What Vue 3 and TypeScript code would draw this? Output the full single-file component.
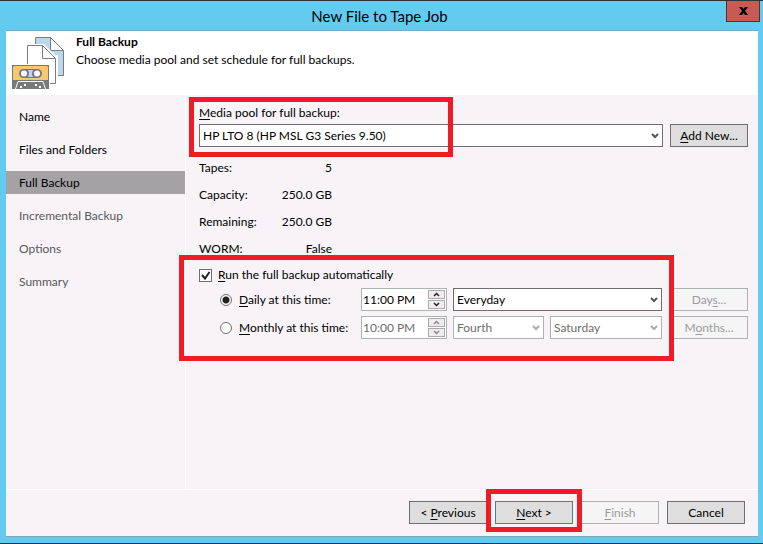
<script setup lang="ts">
import { ref } from 'vue'

interface Step {
  label: string
  state: 'done' | 'current' | 'pending'
}

const steps: Step[] = [
  { label: 'Name', state: 'done' },
  { label: 'Files and Folders', state: 'done' },
  { label: 'Full Backup', state: 'current' },
  { label: 'Incremental Backup', state: 'pending' },
  { label: 'Options', state: 'pending' },
  { label: 'Summary', state: 'pending' },
]

const poolInfo = [
  { name: 'Tapes:', value: '5' },
  { name: 'Capacity:', value: '250.0 GB' },
  { name: 'Remaining:', value: '250.0 GB' },
  { name: 'WORM:', value: 'False' },
]

const runAutomatically = ref(true)
const mode = ref<'daily' | 'monthly'>('daily')
const dailyTime = ref('11:00 PM')
const monthlyTime = ref('10:00 PM')
</script>

<template>
  <div class="window">
    <header class="titlebar">
      <h1 class="title">New File to Tape Job</h1>
      <button class="close" type="button" aria-label="Close">
        <svg width="9" height="8" viewBox="0 0 9 8">
          <path d="M0 0h3l1.500 2L6 0h3L6 4l3 4H6L4.500 6 3 8H0l3-4z" fill="#000" />
        </svg>
      </button>
    </header>

    <div class="client">
      <section class="banner">
        <svg class="banner-icon" width="52" height="53" viewBox="0 0 52 53">
          <path d="M23.500 .5h15l13 13v25h-28z" fill="#bcd6ee" stroke="#7b7d7c" />
          <path d="M38.500 .5v13h13z" fill="#fff" stroke="#7b7d7c" />
          <path d="M14 7h18l13 13v27.500H14z" fill="#fff" />
          <path d="M45 18v23" stroke="#fff" stroke-width="2" />
          <path d="M15.500 8.500h15l13 13v25h-28z" fill="#fff" stroke="#7b7d7c" />
          <path d="M30.500 8.500v13h13" fill="none" stroke="#7b7d7c" />
          <path d="M0 27h38v26H0z" fill="#fff" />
          <path d="M0 28h37v24H0z" fill="#787a79" />
          <path d="M1 30l1-1h33l1 1v13H1z" fill="#f5c872" />
          <rect x="7" y="32" width="23" height="9" rx="4.500" fill="#787a79" />
          <path d="M16 33h5q-2 3.500 0 7h-5q2-3.500 0-7z" fill="#bcd6ee" />
          <circle cx="12" cy="36.500" r="3" fill="#fff" />
          <circle cx="25" cy="36.500" r="3" fill="#fff" />
          <path d="M3.500 52l2.500-7.500h25l2.500 7.500" fill="none" stroke="#fff" />
          <path d="M8 49h2v2H8zM12 47h2v2h-2zM23 47h2v2h-2zM27 49h2v2h-2z" fill="#fff" />
        </svg>
        <div>
          <h2 class="banner-title">Full Backup</h2>
          <p class="banner-text">Choose media pool and set schedule for full backups.</p>
        </div>
      </section>

      <div class="body">
        <nav class="steps">
          <a v-for="step in steps" :key="step.label" href="#" class="step" :class="step.state">{{ step.label }}</a>
        </nav>

        <main class="panel">
          <div class="pool">
            <label for="pool"><u>M</u>edia pool for full backup:</label>
            <div class="row">
              <div class="select grow">
                <select id="pool">
                  <option>HP LTO 8 (HP MSL G3 Series 9.50)</option>
                </select>
                <svg width="8" height="6" viewBox="0 0 8 6"><path d="M1 1l3 3 3-3" /></svg>
              </div>
              <button class="button" type="button"><span><u>A</u>dd New...</span></button>
            </div>
            <div class="mark mark-pool"></div>
          </div>

          <dl class="info">
            <div v-for="item in poolInfo" :key="item.name" class="info-row">
              <dt>{{ item.name }}</dt>
              <dd>{{ item.value }}</dd>
            </div>
          </dl>

          <div class="schedule">
            <div class="check-row">
              <span class="check">
                <input id="auto" v-model="runAutomatically" type="checkbox" />
                <svg v-if="runAutomatically" width="13" height="13" viewBox="0 0 13 13">
                  <path d="M3 6l3 3.500L10.500 3" />
                </svg>
              </span>
              <label for="auto"><u>R</u>un the full backup automatically</label>
            </div>

            <div class="row">
              <div class="mode">
                <input id="daily" v-model="mode" type="radio" value="daily" />
                <label for="daily"><u>D</u>aily at this time:</label>
              </div>
              <div class="time">
                <input v-model="dailyTime" type="text" aria-label="Daily time" />
                <div class="spin">
                  <button type="button" aria-label="Later"><svg width="7" height="5" viewBox="0 0 7 5"><path d="M1 4l2.500-2.500L6 4" /></svg></button>
                  <button type="button" aria-label="Earlier"><svg width="7" height="5" viewBox="0 0 7 5"><path d="M1 1l2.500 2.500L6 1" /></svg></button>
                </div>
              </div>
              <div class="select grow">
                <select aria-label="Days of the week">
                  <option>Everyday</option>
                </select>
                <svg width="8" height="6" viewBox="0 0 8 6"><path d="M1 1l3 3 3-3" /></svg>
              </div>
              <button class="button last" type="button" disabled><span>Day<u>s</u>...</span></button>
            </div>

            <div class="row">
              <div class="mode">
                <input id="monthly" v-model="mode" type="radio" value="monthly" />
                <label for="monthly"><u>M</u>onthly at this time:</label>
              </div>
              <div class="time off">
                <input v-model="monthlyTime" type="text" aria-label="Monthly time" disabled />
                <div class="spin">
                  <button type="button" aria-label="Later" disabled><svg width="7" height="5" viewBox="0 0 7 5"><path d="M1 4l2.500-2.500L6 4" /></svg></button>
                  <button type="button" aria-label="Earlier" disabled><svg width="7" height="5" viewBox="0 0 7 5"><path d="M1 1l2.500 2.500L6 1" /></svg></button>
                </div>
              </div>
              <div class="select week off">
                <select aria-label="Week of the month" disabled>
                  <option>Fourth</option>
                </select>
                <svg width="8" height="6" viewBox="0 0 8 6"><path d="M1 1l3 3 3-3" /></svg>
              </div>
              <div class="select grow off">
                <select aria-label="Day of the week" disabled>
                  <option>Saturday</option>
                </select>
                <svg width="8" height="6" viewBox="0 0 8 6"><path d="M1 1l3 3 3-3" /></svg>
              </div>
              <button class="button last" type="button" disabled><span>M<u>o</u>nths...</span></button>
            </div>
            <div class="mark mark-schedule"></div>
          </div>
        </main>
      </div>

      <footer class="actions">
        <button class="button" type="button"><span>&lt; <u>P</u>revious</span></button>
        <div class="next">
          <button class="button primary" type="button"><span><u>N</u>ext &gt;</span></button>
          <div class="mark mark-next"></div>
        </div>
        <button class="button" type="button" disabled><span><u>F</u>inish</span></button>
        <button class="button" type="button"><span>Cancel</span></button>
      </footer>
    </div>
  </div>
</template>

<style>
body {
  margin: 0;
}
</style>

<style scoped>
.window,
.window * {
  box-sizing: border-box;
}

.window {
  display: flex;
  flex-direction: column;
  min-height: 100vh;
  padding: 0 5px 6px 6px;
  border-top: 1px solid #2b3336;
  border-bottom: 1px solid #12303f;
  background: #63caf0;
  color: #000;
  font: 12px/16px Lato, "Open Sans", sans-serif;
}

button,
input,
select {
  font: inherit;
  color: inherit;
}

u {
  text-underline-offset: 2px;
}

.titlebar {
  position: relative;
  display: flex;
  justify-content: center;
  height: 29px;
  padding-right: 5px;
}

.title {
  margin: 0;
  font-size: 15px;
  font-weight: 400;
  line-height: 30px;
}

.close {
  position: absolute;
  top: 0;
  right: -2px;
  display: flex;
  align-items: center;
  justify-content: center;
  width: 34px;
  height: 21px;
  padding: 0;
  border: 1px solid #5b2f31;
  border-top: 0;
  background: #c75a55;
}

.client {
  display: flex;
  flex: 1;
  flex-direction: column;
  border-top: 1px solid #74a9c8;
  border-bottom: 1px solid #74a9c8;
  background: #f7f3f7;
}

.banner {
  display: flex;
  gap: 12px;
  height: 64px;
  padding: 3px 6px;
  background: #fff;
}

.banner-icon {
  margin-top: 3px;
}

.banner-title,
.banner-text {
  margin: 0;
  font-size: 12px;
}

.banner-text {
  margin-top: 2px;
}

.body {
  display: flex;
  flex: 1;
}

.steps {
  display: flex;
  flex-direction: column;
  gap: 10px;
  width: 180px;
  padding-top: 10px;
  border-right: 1px solid #fff;
}

.step {
  padding-left: 13px;
  color: #000;
  line-height: 23px;
  text-decoration: none;
}

.step.current {
  background: #a5a2a5;
}

.step.pending {
  color: #5a585a;
}

.panel {
  flex: 1;
  padding: 10px 10px 0 13px;
}

.row {
  display: flex;
  align-items: center;
}

.pool,
.schedule,
.next {
  position: relative;
}

.pool label {
  display: block;
  margin-bottom: 3px;
}

.select {
  position: relative;
  display: flex;
}

.grow {
  flex: 1;
}

.week {
  width: 91px;
  margin-right: 6px;
}

.select select {
  width: 100%;
  height: 23px;
  padding: 0 18px 0 3px;
  border: 1px solid #706e70;
  border-radius: 0;
  background: #fff;
  appearance: none;
}

.select svg {
  position: absolute;
  top: 9px;
  right: 4px;
  fill: none;
  stroke: #555;
  stroke-width: 2;
  pointer-events: none;
}

.off.select select,
.time.off {
  border-color: #adb2b5;
  color: #6d6d6d;
  opacity: 1;
}

.off.select svg {
  stroke: #aaa;
}

.button {
  width: 78px;
  height: 23px;
  padding: 0;
  border: 1px solid #706e70;
  border-radius: 0;
  background: #dedede;
  color: #000;
  text-align: center;
}

.button:disabled {
  border-color: #adb2b5;
  background: #f5f5f5;
  color: #9c9a9c;
}

.button.primary {
  border-color: #3c7fb1;
}

.pool .button {
  margin-left: 7px;
}

.button.last {
  margin-left: 8px;
}

.info {
  display: flex;
  flex-direction: column;
  gap: 11px;
  width: 133px;
  margin: 13px 0 0;
}

.info-row {
  display: flex;
  justify-content: space-between;
}

.info dd {
  margin: 0;
}

.schedule {
  display: flex;
  flex-direction: column;
  gap: 5px;
  margin-top: 10px;
}

.check-row {
  display: flex;
  align-items: center;
  gap: 6px;
}

.check {
  position: relative;
  display: flex;
}

.check input {
  width: 13px;
  height: 13px;
  margin: 0;
  border: 1px solid #706e70;
  background: #fff;
  appearance: none;
}

.check svg {
  position: absolute;
  inset: 0;
  fill: none;
  stroke: #222;
  stroke-width: 2;
  pointer-events: none;
}

.mode {
  display: flex;
  align-items: center;
  gap: 7px;
  width: 162px;
  padding-left: 21px;
  white-space: nowrap;
}

.mode input {
  flex: none;
  width: 12px;
  height: 12px;
  margin: 0;
  border: 1px solid #706e70;
  border-radius: 50%;
  background: #fff;
  appearance: none;
}

.mode input:checked {
  background: radial-gradient(circle, #222 3px, #fff 4px);
}

.time {
  display: flex;
  width: 86px;
  height: 23px;
  margin-right: 6px;
  padding: 1px;
  border: 1px solid #adb2b5;
  background: #fff;
}

.time input {
  flex: 1;
  min-width: 0;
  padding: 0;
  border: 0;
  background: transparent;
}

.spin {
  display: flex;
  flex-direction: column;
  gap: 1px;
  width: 17px;
}

.spin button {
  display: flex;
  flex: 1;
  align-items: center;
  justify-content: center;
  padding: 0;
  border: 1px solid #adaaad;
  background: #efebef;
}

.spin svg {
  fill: none;
  stroke: #222;
  stroke-width: 1.5;
}

.off .spin svg {
  stroke: #8a8a8a;
}

.actions {
  display: flex;
  justify-content: flex-end;
  gap: 8px;
  padding: 11px 13px 12px;
  border-top: 1px solid #fff;
}

.next {
  display: flex;
}

/* Callout frames drawn over the controls they highlight */
.mark {
  position: absolute;
  border: 5px solid #ee1c25;
  pointer-events: none;
}

.mark-pool {
  top: -8px;
  left: -10px;
  width: 264px;
  height: 60px;
}

.mark-schedule {
  top: -12px;
  right: 74px;
  left: -20px;
  height: 106px;
}

.mark-next {
  inset: -12px -9px -8px;
}
</style>
